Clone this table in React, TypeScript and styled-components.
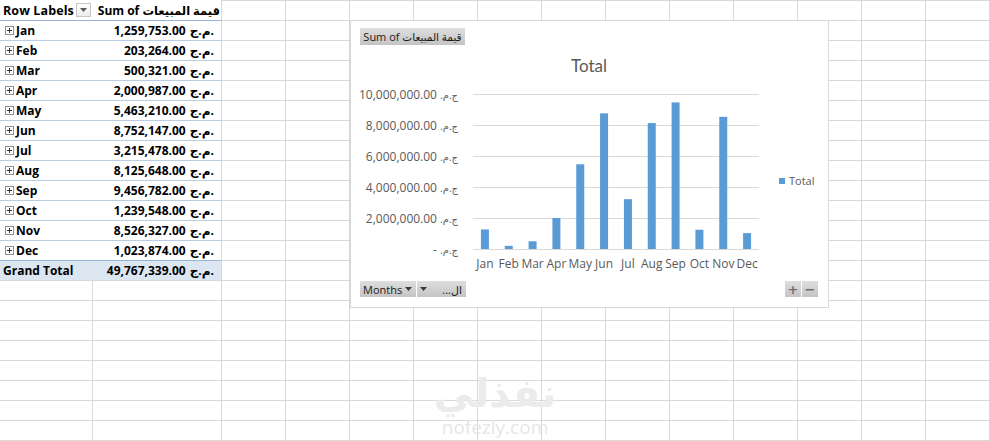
import React from "react";
import styled, { createGlobalStyle } from "styled-components";

const GlobalStyle = createGlobalStyle`
  html, body { margin: 0; padding: 0; background: #fff; }
  body { overflow: hidden; }
  * { box-sizing: border-box; }
`;

const GRID = "#d9d9d9";
const BLUE_DARK = "#95b3d7";
const BLUE_LIGHT = "#b8cce4";
const TABLE_FONT = `"Open Sans", "DejaVu Sans", sans-serif`;
const CHART_FONT = `"Open Sans", "DejaVu Sans", sans-serif`;

const ROWS = 23;
const COLS = 15;

const data: [string, number][] = [
  ["Jan", 1259753],
  ["Feb", 203264],
  ["Mar", 500321],
  ["Apr", 2000987],
  ["May", 5463210],
  ["Jun", 8752147],
  ["Jul", 3215478],
  ["Aug", 8125648],
  ["Sep", 9456782],
  ["Oct", 1239548],
  ["Nov", 8526327],
  ["Dec", 1023874],
];
const total = data.reduce((s, d) => s + d[1], 0);
const fmt = (n: number) =>
  n.toLocaleString("en-US", { minimumFractionDigits: 2, maximumFractionDigits: 2 });
const CUR_LTR = "\u202Dج.م.\u202C";
const CUR_RTL = "\u2067ج.م.\u2069";

const Sheet = styled.div`
  position: relative;
  width: 990px;
  height: 441px;
  overflow: hidden;
  background: #fff;
  display: grid;
  grid-template-columns: 93px 129px repeat(${COLS - 2}, 64px);
  grid-template-rows: 21px repeat(${ROWS - 1}, 20px);
`;

const GridCell = styled.div<{ $top?: boolean }>`
  border-right: 1px solid ${GRID};
  border-bottom: 1px solid ${GRID};
  border-top: ${(p) => (p.$top ? `1px solid ${GRID}` : "none")};
`;

type Kind = "header" | "row" | "lastRow" | "total";

const PivotCell = styled.div<{ $kind: Kind; $right?: boolean }>`
  display: flex;
  align-items: center;
  justify-content: ${(p) => (p.$right ? "flex-end" : "space-between")};
  padding: ${(p) => (p.$right ? "0 7px 0 0" : "0 2px 0 3px")};
  min-width: 0;
  font-family: ${TABLE_FONT};
  font-weight: 700;
  font-size: 12px;
  color: #000;
  white-space: nowrap;
  background: ${(p) => (p.$kind === "total" ? "#dce6f1" : "#fff")};
  border-right: ${(p) => (p.$right ? `1px solid ${GRID}` : "none")};
  border-bottom: 1px solid
    ${(p) =>
      p.$kind === "header" || p.$kind === "lastRow"
        ? BLUE_DARK
        : p.$kind === "total"
        ? GRID
        : BLUE_LIGHT};
`;

const HeaderLabel = styled.span`
  font-size: 12.5px;
  letter-spacing: 0.1px;
`;

const HeaderValue = styled.span`
  margin-right: -6px;
`;

const ArabicText = styled.span<{ $size: number }>`
  font-size: ${(p) => p.$size}px;
`;

const RowLabel = styled.span`
  display: flex;
  align-items: center;
  gap: 2px;
`;

const ExpandBox = styled.svg`
  width: 9px;
  height: 9px;
  margin-left: 2px;
  flex: none;
`;

const FilterButton = styled.span`
  width: 15px;
  height: 14px;
  flex: none;
  border: 1px solid #c6c6c6;
  background: linear-gradient(#ffffff, #ececec);
  display: flex;
  align-items: center;
  justify-content: center;
`;

const Currency = styled.span`
  margin-left: 4px;
`;

const ChartBox = styled.div`
  position: absolute;
  left: 350px;
  top: 20px;
  width: 479px;
  height: 288px;
  border: 1px solid #d9d9d9;
  background: #fff;
  padding: 7px 10px 8px 9px;
  display: flex;
  flex-direction: column;
  font-family: ${CHART_FONT};
`;

const GrayButton = styled.div`
  display: flex;
  align-items: center;
  height: 17px;
  background: linear-gradient(#dedede, #c4c4c4);
  color: #1a1a1a;
  font-size: 11px;
  white-space: nowrap;
`;

const FieldButton = styled(GrayButton)`
  align-self: flex-start;
  width: 105px;
  padding: 0 3px;
  justify-content: center;
`;

const Title = styled.div`
  margin-top: 9px;
  text-align: center;
  font-family: Lato, "Open Sans", sans-serif;
  font-size: 17px;
  line-height: 24px;
  color: #595959;
`;

const PlotRow = styled.div`
  display: flex;
  align-items: flex-start;
  margin-top: 1px;
`;

const PlotSvg = styled.svg`
  display: block;
  flex: none;
  overflow: visible;
`;

const Legend = styled.div`
  display: flex;
  align-items: center;
  gap: 4px;
  margin: 94px 0 0 10px;
  font-size: 11px;
  color: #595959;
`;

const LegendSwatch = styled.span`
  width: 6px;
  height: 6px;
  background: #5b9bd5;
`;

const BottomBar = styled.div`
  display: flex;
  justify-content: space-between;
  align-items: center;
  margin-top: 2px;
`;

const ButtonGroup = styled.div`
  display: flex;
  gap: 1px;
`;

const AxisButton = styled(GrayButton)<{ $w: number; $rtl?: boolean }>`
  width: ${(p) => p.$w}px;
  height: 16px;
  padding: 0 4px 0 3px;
  justify-content: space-between;
  flex-direction: ${(p) => (p.$rtl ? "row-reverse" : "row")};
  font-size: 11px;
`;

const ZoomButton = styled(GrayButton)`
  width: 16px;
  height: 16px;
  justify-content: center;
  color: #6e6e6e;
  font-weight: 700;
  font-size: 13px;
  font-family: "DejaVu Sans", sans-serif;
`;

const Watermark = styled.div`
  position: absolute;
  left: 395px;
  top: 370px;
  width: 200px;
  display: flex;
  flex-direction: column;
  align-items: center;
  pointer-events: none;
  color: #ebebeb;
`;

const WatermarkArabic = styled.div`
  font-family: "DejaVu Sans", sans-serif;
  font-weight: 700;
  font-size: 40px;
  line-height: 47px;
`;

const WatermarkLatin = styled.div`
  font-family: "Open Sans", sans-serif;
  font-size: 19px;
  line-height: 20px;
  color: #e6e6e6;
`;

const Arrow = ({ color = "#3a3a3a" }: { color?: string }) => (
  <svg width="7" height="4" viewBox="0 0 7 4">
    <path d="M0 0 L7 0 L3.5 4 Z" fill={color} />
  </svg>
);

const Expand = () => (
  <ExpandBox viewBox="0 0 9 9">
    <rect x="0.5" y="0.5" width="8" height="8" fill="#fff" stroke="#8e8e8e" />
    <path d="M2 4.5 H7 M4.5 2 V7" stroke="#333" strokeWidth="1" />
  </ExpandBox>
);

// plot geometry (svg origin at chart content top-left)
const PX0 = 113;
const PX1 = 399;
const PY0 = 15;
const STEP = 31;
const BASE = PY0 + STEP * 5;
const MAXV = 10000000;

const Plot = () => {
  const cw = (PX1 - PX0) / data.length;
  const ticks = [10, 8, 6, 4, 2, 0];
  return (
    <PlotSvg width="409" height="200">
      {ticks.map((t, i) => (
        <line
          key={t}
          x1={PX0}
          x2={PX1}
          y1={PY0 + i * STEP + 0.5}
          y2={PY0 + i * STEP + 0.5}
          stroke="#d9d9d9"
          strokeWidth="1"
        />
      ))}
      {ticks.map((t, i) => (
        <text
          key={"l" + t}
          x={98}
          y={PY0 + i * STEP + 4.5}
          textAnchor="end"
          fontSize="12"
          fill="#595959"
          fontFamily={CHART_FONT}
        >
          {t === 0 ? "-      " : fmt(t * 1000000) + " "}
          <tspan fontSize="10">{CUR_RTL}</tspan>
        </text>
      ))}
      {data.map(([m, v], i) => {
        const h = (v / MAXV) * (BASE - PY0);
        const cx = PX0 + cw * i + cw / 2;
        return (
          <g key={m}>
            <rect x={cx - 4} y={BASE - h} width={8} height={h} fill="#5b9bd5" />
            <text
              x={cx}
              y={189}
              textAnchor="middle"
              fontSize="12"
              fill="#595959"
              fontFamily={CHART_FONT}
            >
              {m}
            </text>
          </g>
        );
      })}
    </PlotSvg>
  );
};

export default function App() {
  const cells: React.ReactNode[] = [];
  for (let r = 0; r < ROWS; r++) {
    for (let c = 0; c < COLS; c++) {
      const key = `${r}-${c}`;
      if (r < 14 && c < 2) {
        if (r === 0) {
          cells.push(
            c === 0 ? (
              <PivotCell key={key} $kind="header">
                <HeaderLabel>Row Labels</HeaderLabel>
                <FilterButton>
                  <Arrow color="#5a5a5a" />
                </FilterButton>
              </PivotCell>
            ) : (
              <PivotCell key={key} $kind="header" $right>
                <HeaderValue>
                  Sum of <ArabicText $size={11.5}>قيمة المبيعات</ArabicText>
                </HeaderValue>
              </PivotCell>
            )
          );
        } else if (r <= 12) {
          const [m, v] = data[r - 1];
          const kind: Kind = r === 12 ? "lastRow" : "row";
          cells.push(
            c === 0 ? (
              <PivotCell key={key} $kind={kind}>
                <RowLabel>
                  <Expand />
                  {m}
                </RowLabel>
              </PivotCell>
            ) : (
              <PivotCell key={key} $kind={kind} $right>
                {fmt(v)}
                <Currency>{CUR_LTR}</Currency>
              </PivotCell>
            )
          );
        } else {
          cells.push(
            c === 0 ? (
              <PivotCell key={key} $kind="total">
                <span>Grand Total</span>
              </PivotCell>
            ) : (
              <PivotCell key={key} $kind="total" $right>
                {fmt(total)}
                <Currency>{CUR_LTR}</Currency>
              </PivotCell>
            )
          );
        }
      } else {
        cells.push(<GridCell key={key} $top={r === 0} />);
      }
    }
  }

  return (
    <>
      <GlobalStyle />
      <Sheet>
        {cells}
        <ChartBox>
          <FieldButton>
            <span>
              Sum of <ArabicText $size={10.5}>قيمة المبيعات</ArabicText>
            </span>
          </FieldButton>
          <Title>Total</Title>
          <PlotRow>
            <Plot />
            <Legend>
              <LegendSwatch />
              Total
            </Legend>
          </PlotRow>
          <BottomBar>
            <ButtonGroup>
              <AxisButton $w={56}>
                <span>Months</span>
                <Arrow />
              </AxisButton>
              <AxisButton $w={49} $rtl>
                <span dir="rtl">ال...</span>
                <Arrow />
              </AxisButton>
            </ButtonGroup>
            <ButtonGroup>
              <ZoomButton>+</ZoomButton>
              <ZoomButton>−</ZoomButton>
            </ButtonGroup>
          </BottomBar>
        </ChartBox>
        <Watermark>
          <WatermarkArabic>نفذلي</WatermarkArabic>
          <WatermarkLatin>nofezly.com</WatermarkLatin>
        </Watermark>
      </Sheet>
    </>
  );
}
